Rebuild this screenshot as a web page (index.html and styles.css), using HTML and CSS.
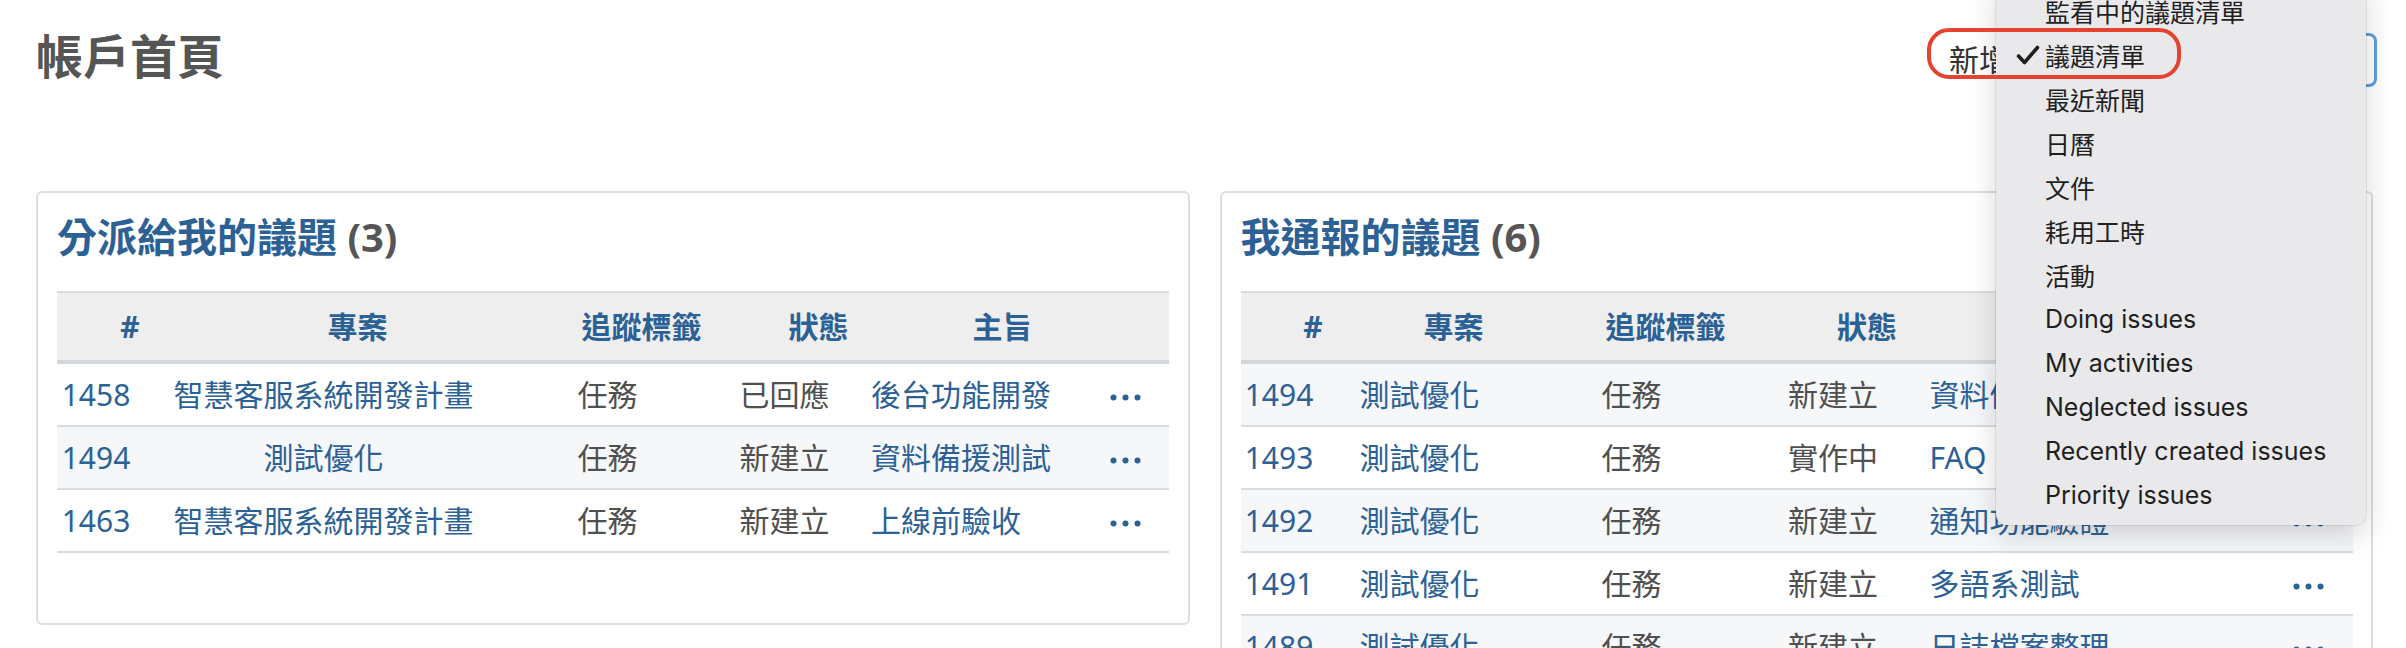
FILE: index.html
```html
<!DOCTYPE html>
<html lang="zh-Hant">
<head>
<meta charset="utf-8">
<title>帳戶首頁</title>
<link rel="stylesheet" href="styles.css">
</head>
<body>
<div class="page">
  <div class="top">
    <h2 class="title">帳戶首頁</h2>
    <div class="add-block">
      <span class="add-label">新增</span>
      <span class="select"></span>
    </div>
  </div>

  <div class="columns">
    <section class="box">
      <h3 class="box-title"><a class="link">分派給我的議題</a> <span class="count">(3)</span></h3>
      <table class="list t1">
        <colgroup>
          <col class="c-id"><col class="c-project"><col class="c-tracker"><col class="c-status"><col class="c-subject"><col class="c-buttons">
        </colgroup>
        <thead>
          <tr><th>#</th><th>專案</th><th>追蹤標籤</th><th>狀態</th><th>主旨</th><th class="th-buttons"></th></tr>
        </thead>
        <tbody>
          <tr class="even">
            <td><a class="link">1458</a></td><td><a class="link">智慧客服系統開發計畫</a></td><td>任務</td><td>已回應</td><td class="subject"><a class="link">後台功能開發</a></td>
            <td class="buttons"><svg class="dots" width="31" height="7" viewBox="0 0 31 7"><circle cx="3.5" cy="3.5" r="3"/><circle cx="15.5" cy="3.5" r="3"/><circle cx="27.5" cy="3.5" r="3"/></svg></td>
          </tr>
          <tr class="odd">
            <td><a class="link">1494</a></td><td><a class="link">測試優化</a></td><td>任務</td><td>新建立</td><td class="subject"><a class="link">資料備援測試</a></td>
            <td class="buttons"><svg class="dots" width="31" height="7" viewBox="0 0 31 7"><circle cx="3.5" cy="3.5" r="3"/><circle cx="15.5" cy="3.5" r="3"/><circle cx="27.5" cy="3.5" r="3"/></svg></td>
          </tr>
          <tr class="even">
            <td><a class="link">1463</a></td><td><a class="link">智慧客服系統開發計畫</a></td><td>任務</td><td>新建立</td><td class="subject"><a class="link">上線前驗收</a></td>
            <td class="buttons"><svg class="dots" width="31" height="7" viewBox="0 0 31 7"><circle cx="3.5" cy="3.5" r="3"/><circle cx="15.5" cy="3.5" r="3"/><circle cx="27.5" cy="3.5" r="3"/></svg></td>
          </tr>
        </tbody>
      </table>
    </section>

    <section class="box">
      <h3 class="box-title"><a class="link">我通報的議題</a> <span class="count">(6)</span></h3>
      <table class="list t2">
        <colgroup>
          <col class="c-id"><col class="c-project"><col class="c-tracker"><col class="c-status"><col class="c-subject"><col class="c-buttons">
        </colgroup>
        <thead>
          <tr><th>#</th><th>專案</th><th>追蹤標籤</th><th>狀態</th><th>主旨</th><th class="th-buttons"></th></tr>
        </thead>
        <tbody>
          <tr class="odd">
            <td><a class="link">1494</a></td><td><a class="link">測試優化</a></td><td>任務</td><td>新建立</td><td class="subject"><a class="link">資料備援測試</a></td>
            <td class="buttons"><svg class="dots" width="31" height="7" viewBox="0 0 31 7"><circle cx="3.5" cy="3.5" r="3"/><circle cx="15.5" cy="3.5" r="3"/><circle cx="27.5" cy="3.5" r="3"/></svg></td>
          </tr>
          <tr class="even">
            <td><a class="link">1493</a></td><td><a class="link">測試優化</a></td><td>任務</td><td>實作中</td><td class="subject"><a class="link">FAQ 頁面整理</a></td>
            <td class="buttons"><svg class="dots" width="31" height="7" viewBox="0 0 31 7"><circle cx="3.5" cy="3.5" r="3"/><circle cx="15.5" cy="3.5" r="3"/><circle cx="27.5" cy="3.5" r="3"/></svg></td>
          </tr>
          <tr class="odd">
            <td><a class="link">1492</a></td><td><a class="link">測試優化</a></td><td>任務</td><td>新建立</td><td class="subject"><a class="link">通知功能驗證</a></td>
            <td class="buttons"><svg class="dots" width="31" height="7" viewBox="0 0 31 7"><circle cx="3.5" cy="3.5" r="3"/><circle cx="15.5" cy="3.5" r="3"/><circle cx="27.5" cy="3.5" r="3"/></svg></td>
          </tr>
          <tr class="even">
            <td><a class="link">1491</a></td><td><a class="link">測試優化</a></td><td>任務</td><td>新建立</td><td class="subject"><a class="link">多語系測試</a></td>
            <td class="buttons"><svg class="dots" width="31" height="7" viewBox="0 0 31 7"><circle cx="3.5" cy="3.5" r="3"/><circle cx="15.5" cy="3.5" r="3"/><circle cx="27.5" cy="3.5" r="3"/></svg></td>
          </tr>
          <tr class="odd">
            <td><a class="link">1489</a></td><td><a class="link">測試優化</a></td><td>任務</td><td>新建立</td><td class="subject"><a class="link">日誌檔案整理</a></td>
            <td class="buttons"><svg class="dots" width="31" height="7" viewBox="0 0 31 7"><circle cx="3.5" cy="3.5" r="3"/><circle cx="15.5" cy="3.5" r="3"/><circle cx="27.5" cy="3.5" r="3"/></svg></td>
          </tr>
        </tbody>
      </table>
    </section>
  </div>
</div>

<div class="menu">
  <div class="menu-item"><span class="check"></span>監看中的議題清單</div>
  <div class="menu-item"><span class="check"><svg class="check-icon" width="24" height="20" viewBox="0 0 24 20"><polyline points="2.5,11 8.5,17.5 21.5,2.5"/></svg></span>議題清單</div>
  <div class="menu-item"><span class="check"></span>最近新聞</div>
  <div class="menu-item"><span class="check"></span>日曆</div>
  <div class="menu-item"><span class="check"></span>文件</div>
  <div class="menu-item"><span class="check"></span>耗用工時</div>
  <div class="menu-item"><span class="check"></span>活動</div>
  <div class="menu-item"><span class="check"></span>Doing issues</div>
  <div class="menu-item"><span class="check"></span>My activities</div>
  <div class="menu-item"><span class="check"></span>Neglected issues</div>
  <div class="menu-item"><span class="check"></span>Recently created issues</div>
  <div class="menu-item"><span class="check"></span>Priority issues</div>
</div>

<div class="annot"></div>
</body>
</html>
```

FILE: styles.css
```css
html {
  overflow: hidden;
}

body {
  margin: 0;
  background: #ffffff;
  color: #505050;
  font-family: "Noto Sans", "Noto Sans CJK TC", sans-serif;
}

.page {
  padding: 0 33px 0 36px;
}

.link {
  color: #2c6196;
  text-decoration: none;
}

/* top bar */
.top {
  display: flex;
  justify-content: space-between;
  align-items: flex-start;
  margin-bottom: 104px;
}

.title {
  margin: 0;
  padding-top: 30px;
  font-size: 47px;
  line-height: 52px;
  font-weight: bold;
  color: #555555;
}

.add-block {
  display: flex;
  align-items: center;
  gap: 8px;
  margin-top: 33px;
  margin-right: -4px;
}

.add-label {
  font-size: 30px;
  line-height: 54px;
  color: #333333;
}

.select {
  display: block;
  width: 360px;
  height: 54px;
  box-sizing: border-box;
  border: 3px solid #5e9ee0;
  border-radius: 8px;
  background: #ffffff;
}

/* boxes */
.columns {
  display: flex;
  gap: 30px;
  align-items: flex-start;
}

.box {
  flex: 1 1 0;
  min-width: 0;
  border: 2px solid #dadee3;
  border-radius: 6px;
  padding: 20px 19px 70px;
  background: #ffffff;
}

.box-title {
  margin: 0 0 30px;
  font-size: 40px;
  line-height: 48px;
  font-weight: bold;
}

.count {
  color: #555555;
}

/* tables */
.list {
  width: 100%;
  table-layout: fixed;
  border-collapse: separate;
  border-spacing: 0;
  font-size: 30px;
}

.list th {
  padding: 13px 0 13px 34px;
  line-height: 41px;
  background: #eeeeee;
  border-top: 2px solid #d9dde2;
  border-bottom: 4px solid #d3d7dc;
  color: #2c6196;
  font-weight: bold;
  text-align: center;
  white-space: nowrap;
}

.list td {
  padding: 10px 34px 10px 0;
  line-height: 41px;
  border-bottom: 2px solid #d9dde2;
  text-align: center;
  white-space: nowrap;
  overflow: hidden;
}

.list tr.odd td {
  background: #f6f7f9;
}

.list td.subject {
  text-align: left;
  padding-left: 5px;
}

.list td.buttons {
  padding-right: 24px;
}

.dots {
  display: inline-block;
  vertical-align: middle;
  fill: #2c6196;
}

.t1 .c-id { width: 112px; }
.t1 .c-project { width: 343px; }
.t1 .c-tracker { width: 225px; }
.t1 .c-status { width: 129px; }
.t1 .c-subject { width: 239px; }
.t1 .c-buttons { width: 64px; }

.t2 .c-id { width: 111px; }
.t2 .c-project { width: 170px; }
.t2 .c-tracker { width: 254px; }
.t2 .c-status { width: 149px; }
.t2 .c-subject { width: 364px; }
.t2 .c-buttons { width: 64px; }

/* open dropdown menu */
.menu {
  position: absolute;
  left: 1996px;
  top: -20px;
  width: 370px;
  padding: 9px 0 8px;
  background: #e9e9eb;
  border-radius: 0 0 11px 11px;
  box-shadow: 0 10px 30px rgba(0, 0, 0, 0.16), 0 0 0 1px rgba(0, 0, 0, 0.07);
  font-family: "Inter", "Noto Sans CJK TC", sans-serif;
  font-size: 25px;
  color: #1f1f1f;
  z-index: 2;
}

.menu-item {
  display: flex;
  align-items: center;
  height: 44px;
  padding-left: 20px;
  white-space: nowrap;
}

.check {
  width: 29px;
  flex: none;
  display: flex;
  align-items: center;
}

.check-icon {
  display: block;
  fill: none;
  stroke: #1f1f1f;
  stroke-width: 3.6;
  stroke-linecap: round;
  stroke-linejoin: round;
}

/* red annotation */
.annot {
  position: absolute;
  left: 1927px;
  top: 28px;
  width: 254px;
  height: 51px;
  box-sizing: border-box;
  border: 4px solid #e4442f;
  border-radius: 22px;
  z-index: 3;
}
```
